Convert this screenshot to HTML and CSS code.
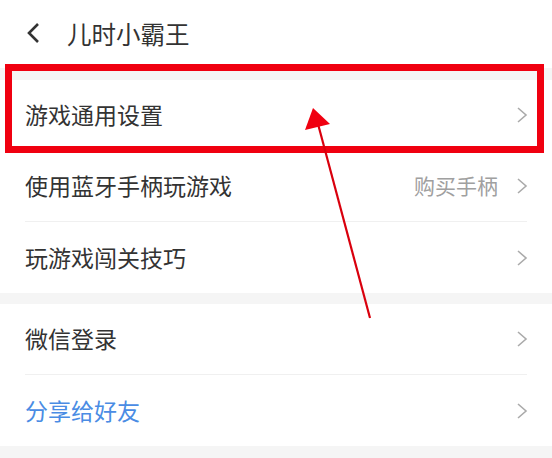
FILE: index.html
```html
<!DOCTYPE html>
<html lang="zh-CN">
<head>
    <meta charset="UTF-8">
    <meta name="viewport" content="width=device-width, initial-scale=1.0">
    <title>儿时小霸王</title>
    <link rel="stylesheet" href="styles.css">
</head>
<body>
    <!-- 顶部标题栏 -->
    <div class="header">
        <svg class="back" width="16" height="22" viewBox="0 0 16 22">
            <polyline points="13,2 4,11 13,20" fill="none" stroke="#333" stroke-width="2.6"/>
        </svg>
        <span class="title">儿时小霸王</span>
    </div>

    <div class="group">
        <div class="row">
            <span class="label">游戏通用设置</span>
            <svg class="arrow" width="12" height="18" viewBox="0 0 12 18"><polyline points="2,2 10,9 2,16"/></svg>
        </div>
        <div class="row">
            <span class="label">使用蓝牙手柄玩游戏</span>
            <span class="extra">购买手柄</span>
            <svg class="arrow" width="12" height="18" viewBox="0 0 12 18"><polyline points="2,2 10,9 2,16"/></svg>
        </div>
        <div class="row">
            <span class="label">玩游戏闯关技巧</span>
            <svg class="arrow" width="12" height="18" viewBox="0 0 12 18"><polyline points="2,2 10,9 2,16"/></svg>
        </div>
    </div>

    <div class="group">
        <div class="row">
            <span class="label">微信登录</span>
            <svg class="arrow" width="12" height="18" viewBox="0 0 12 18"><polyline points="2,2 10,9 2,16"/></svg>
        </div>
        <div class="row">
            <span class="label blue">分享给好友</span>
            <svg class="arrow" width="12" height="18" viewBox="0 0 12 18"><polyline points="2,2 10,9 2,16"/></svg>
        </div>
    </div>

    <!-- 标注: 红框和箭头 -->
    <div class="mark-box"></div>
    <svg class="mark-arrow" width="552" height="458" viewBox="0 0 552 458">
        <line x1="370" y1="318" x2="318" y2="124" stroke="#d9000d" stroke-width="2.2"/>
        <polygon points="313,108 305,130 330,124" fill="#f00010"/>
    </svg>
</body>
</html>
```

FILE: styles.css
```css
body {
    margin: 0;
    background-color: #f5f5f5;
    font-family: "Noto Sans CJK SC", "Noto Sans", sans-serif;
    color: #333333;
    height: 458px;
    overflow: hidden;
    position: relative;
}

.header {
    height: 68px;
    background-color: #ffffff;
    display: flex;
    align-items: center;
    padding-left: 25px;
    margin-bottom: 12px;
}

.back {
    margin-right: 26px;
    margin-top: -2px;
}

.title {
    font-size: 24.5px;
    color: #333333;
    margin-top: -2px;
}

.group {
    background-color: #ffffff;
    margin-bottom: 11px;
}

.row {
    height: 70px;
    margin: 0 25px;
    border-bottom: 1px solid #f0f0f0;
    display: flex;
    align-items: center;
}

.row:last-child {
    border-bottom: none;
    height: 71px;
}

.label {
    font-size: 23px;
    flex: 1;
    margin-top: -2px;
}

.blue {
    color: #4a8ce4;
}

.extra {
    font-size: 21px;
    color: #a0a0a0;
    margin-right: 18px;
    margin-top: -2px;
}

.arrow {
    fill: none;
    stroke: #aaaaaa;
    stroke-width: 1.6;
    margin-right: -1px;
}

.mark-box {
    position: absolute;
    left: 5px;
    top: 64px;
    width: 525px;
    height: 75px;
    border: 7px solid #f00010;
}

.mark-arrow {
    position: absolute;
    left: 0;
    top: 0;
}
```
